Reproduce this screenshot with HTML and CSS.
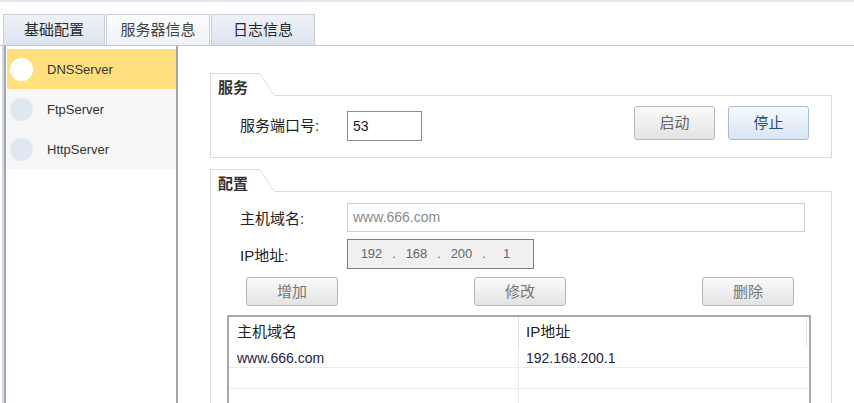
FILE: index.html
```html
<!DOCTYPE html>
<html lang="zh">
<head>
<meta charset="utf-8">
<title>服务器信息</title>
<link rel="stylesheet" href="styles.css">
</head>
<body>
<div class="tabs">
  <div class="tab t1">基础配置</div>
  <div class="tab active">服务器信息</div>
  <div class="tab">日志信息</div>
</div>
<div class="main">
  <div class="side">
    <div class="side-in">
      <div class="item sel"><span class="dot"></span>DNSServer</div>
      <div class="item"><span class="dot"></span>FtpServer</div>
      <div class="item"><span class="dot"></span>HttpServer</div>
    </div>
  </div>
  <div class="content">
    <div class="group">
      <div class="gtitle">
        <div class="gh">服务</div>
        <svg class="slant" width="16" height="23" viewBox="0 0 16 23"><path d="M0.5 0.5 L15.5 22.5" stroke="#dcdcdc" stroke-width="1" fill="none"/></svg>
        <div class="gline"></div>
      </div>
      <div class="gbody svc">
        <div class="lbl">服务端口号:</div>
        <div class="port">53</div>
        <div class="spacer"></div>
        <div class="btn">启动</div>
        <div class="btn blue">停止</div>
      </div>
    </div>
    <div class="group g2">
      <div class="gtitle">
        <div class="gh">配置</div>
        <svg class="slant" width="16" height="23" viewBox="0 0 16 23"><path d="M0.5 0.5 L15.5 22.5" stroke="#dcdcdc" stroke-width="1" fill="none"/></svg>
        <div class="gline"></div>
      </div>
      <div class="gbody cfg">
        <div class="frow">
          <div class="lbl">主机域名:</div>
          <div class="host">www.666.com</div>
        </div>
        <div class="frow r2">
          <div class="lbl">IP地址:</div>
          <div class="ip"><span class="n">192</span><span class="d">.</span><span class="n">168</span><span class="d">.</span><span class="n">200</span><span class="d">.</span><span class="n">1</span></div>
        </div>
        <div class="brow">
          <div class="btn sm">增加</div>
          <div class="btn sm">修改</div>
          <div class="btn sm">删除</div>
        </div>
        <div class="table">
          <div class="thead">
            <div class="th c1">主机域名</div>
            <div class="th c2">IP地址</div>
          </div>
          <div class="tr">
            <div class="td c1">www.666.com</div>
            <div class="td c2">192.168.200.1</div>
          </div>
          <div class="tr">
            <div class="td c1"></div>
            <div class="td c2"></div>
          </div>
          <div class="tr">
            <div class="td c1"></div>
            <div class="td c2"></div>
          </div>
        </div>
      </div>
    </div>
  </div>
</div>
</body>
</html>
```
FILE: styles.css
```css
* { box-sizing: border-box; margin: 0; padding: 0; }
html, body { background: #fff; }
body {
  width: 854px;
  height: 403px;
  overflow: hidden;
  border-top: 2px solid #e2e7ed;
  font-family: "Liberation Sans", "Noto Sans CJK SC", sans-serif;
  font-size: 13px;
  color: #222;
}
.tabs {
  display: flex;
  gap: 1px;
  padding-left: 3px;
  margin-top: 12px;
  border-bottom: 1px solid #c4c8cd;
}
.tab {
  width: 104px;
  height: 31px;
  border: 1px solid #c8cfd7;
  border-bottom: none;
  background: linear-gradient(#eef2f7, #dbe4ee);
  font-size: 15px;
  line-height: 29px;
  text-align: center;
  color: #2a2a2a;
}
.tab.t1 { width: 102px; }
.tab.active {
  background: linear-gradient(#fbfcfd, #eef2f7);
  color: #444;
}
.main {
  display: flex;
  height: 357px;
}
.side {
  margin-left: 2px;
  width: 176px;
  border-left: 2px solid #d3dae2;
}
.side-in {
  height: 100%;
  border-left: 2px solid #a3a8ae;
  border-right: 2px solid #a3a8ae;
  padding: 3px 0 0 1px;
}
.item {
  height: 40px;
  display: flex;
  align-items: center;
  background: #f7f7f7;
  font-size: 13px;
  color: #333;
}
.item.sel { background: #ffe07c; }
.dot {
  width: 23px;
  height: 23px;
  border-radius: 50%;
  background: #dfe7f0;
  margin: 0 14px 0 3px;
}
.item.sel .dot { background: #fff; }
.content {
  flex: 1;
  padding: 27px 22px 0 32px;
}
.gtitle {
  display: flex;
  height: 23px;
}
.gh {
  width: 50px;
  border-top: 1px solid #dcdcdc;
  border-left: 1px solid #dcdcdc;
  padding: 5px 0 0 7px;
  font-size: 15px;
  line-height: 17px;
  font-weight: bold;
  color: #333;
}
.slant { display: block; flex: none; margin-left: -1px; }
.gline {
  flex: 1;
  border-bottom: 1px solid #dcdcdc;
}
.gbody {
  border: 1px solid #dcdcdc;
  border-top: none;
}
.lbl {
  width: 107px;
  font-size: 15px;
  color: #222;
}
.svc {
  height: 62px;
  display: flex;
  align-items: flex-start;
  padding: 10px 22px 0 29px;
}
.svc .lbl { margin-top: 5px; line-height: 29px; }
.port {
  margin-top: 5px;
  width: 75px;
  height: 30px;
  border: 1px solid #8c8c8c;
  padding-left: 5px;
  line-height: 28px;
  font-size: 14px;
  color: #1a1a1a;
}
.spacer { flex: 1; }
.btn {
  width: 81px;
  height: 34px;
  border: 1px solid #b8b8b8;
  border-radius: 3px;
  background: linear-gradient(#fafafa, #e3e3e3);
  font-size: 15px;
  line-height: 32px;
  text-align: center;
  color: #666;
}
.btn + .btn { margin-left: 13px; }
.btn.blue {
  background: linear-gradient(#f6f9fd, #d8e6f4);
  border-color: #a9bcd3;
  color: #2a4d80;
}
.g2 { margin-top: 11px; }
.cfg {
  height: 211px;
  border-bottom: none;
  padding-top: 11px;
  display: flex;
  flex-direction: column;
}
.frow {
  display: flex;
  align-items: center;
  padding-left: 29px;
}
.r2 { margin-top: 7px; }
.host {
  width: 458px;
  height: 29px;
  border: 1px solid #cfcfcf;
  padding-left: 5px;
  line-height: 27px;
  font-size: 14px;
  color: #8a8a8a;
}
.ip {
  width: 187px;
  height: 30px;
  border: 1px solid #7d7d7d;
  background: #f0f0f0;
  display: flex;
  padding-left: 6px;
  line-height: 28px;
  font-size: 13px;
  color: #666;
}
.ip .n { width: 35px; text-align: center; }
.ip .d { width: 10px; text-align: center; }
.brow {
  display: flex;
  justify-content: space-between;
  padding: 0 37px 0 35px;
  margin-top: 8px;
}
.btn.sm {
  width: 92px;
  height: 29px;
  line-height: 27px;
  margin-left: 0;
  color: #777;
}
.table {
  flex: 1;
  margin: 9px 20px 0 16px;
  border: 2px solid #a6aaaf;
  border-bottom: none;
  overflow: hidden;
}
.thead, .tr {
  display: flex;
}
.thead { height: 30px; }
.c1 { width: 290px; border-right: 1px solid #e2e2e2; padding-left: 8px; }
.c2 { flex: 1; padding-left: 7px; }
.th {
  font-size: 15px;
  line-height: 30px;
  color: #222;
}
.th.c1 { border-right-color: #dcdcdc; }
.th.c2 { margin-right: 2px; border-right: 1px solid #e6e6e6; }
.tr {
  height: 21px;
  border-bottom: 1px solid #ececec;
}
.td {
  font-size: 14px;
  padding-top: 3px;
  line-height: 17px;
  color: #1e2346;
}
.td.c1 { border-right-color: #ececec; }
```
